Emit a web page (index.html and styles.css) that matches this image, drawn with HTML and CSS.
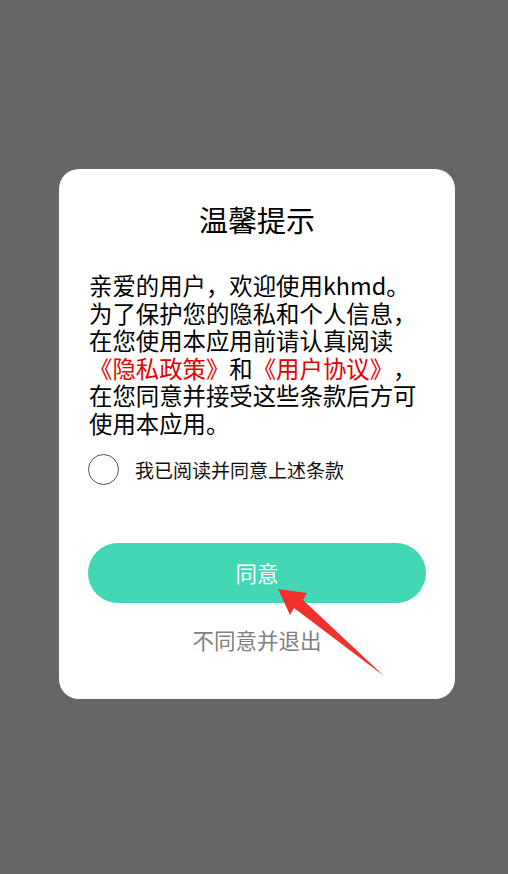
FILE: index.html
```html
<!DOCTYPE html>
<html lang="zh-CN">
<head>
    <meta charset="UTF-8">
    <meta name="viewport" content="width=device-width, initial-scale=1.0">
    <title>温馨提示</title>
    <link rel="stylesheet" href="styles.css">
</head>
<body>
    <div class="dialog">
        <h1 class="dialog-title">温馨提示</h1>
        <p class="dialog-text">
            亲爱的用户，欢迎使用khmd。<br>
            为了保护您的隐私和个人信息，<br>
            在您使用本应用前请认真阅读<br>
            <a class="link" href="#">《隐私政策》</a>和<a class="link" href="#">《用户协议》</a>，<br>
            在您同意并接受这些条款后方可<br>
            使用本应用。
        </p>
        <label class="check-row">
            <span class="check-circle"></span>
            <span class="check-label">我已阅读并同意上述条款</span>
        </label>
        <button class="btn-agree">同意</button>
        <div class="btn-exit">不同意并退出</div>
    </div>

    <!-- pointer arrow drawn over the dialog -->
    <svg class="arrow" width="508" height="874" viewBox="0 0 508 874">
        <polygon points="278,589 307,593 303,600 384,676 294,608 290,615" fill="#f2312f"/>
    </svg>
</body>
</html>
```

FILE: styles.css
```css
body {
    margin: 0;
    background-color: #666666;
    font-family: "Noto Sans CJK SC", "Noto Sans", sans-serif;
    height: 874px;
    position: relative;
    text-spacing-trim: space-all;
}

.dialog {
    width: 396px;
    box-sizing: border-box;
    margin: 0 0 0 59px;
    position: relative;
    top: 169px;
    background-color: #fff;
    border-radius: 20px;
    padding: 30px 30px 44px;
}

.dialog-title {
    margin: 0;
    font-size: 29px;
    font-weight: normal;
    line-height: 40px;
    text-align: center;
    color: #000;
}

.dialog-text {
    margin: 33px 0 0;
    font-size: 23.4px;
    line-height: 27.6px;
    color: #000;
}

.link {
    color: #e60000;
    text-decoration: none;
}

.check-row {
    display: flex;
    align-items: center;
    margin-top: 16px;
    height: 32px;
}

.check-circle {
    width: 31px;
    height: 31px;
    box-sizing: border-box;
    border: 1px solid #555;
    border-radius: 50%;
    margin-left: -1px;
}

.check-label {
    margin-left: 16px;
    font-size: 19px;
    color: #111;
}

.btn-agree {
    display: block;
    width: 338px;
    height: 60px;
    margin: 57px 0 0 -1px;
    border: none;
    border-radius: 30px;
    background-color: #44d7b6;
    color: #fff;
    font-family: inherit;
    font-size: 21.5px;
}

.btn-exit {
    margin-top: 22px;
    text-align: center;
    font-size: 21.5px;
    line-height: 30px;
    color: #808080;
}

.arrow {
    position: absolute;
    top: 0;
    left: 0;
    pointer-events: none;
}
```
